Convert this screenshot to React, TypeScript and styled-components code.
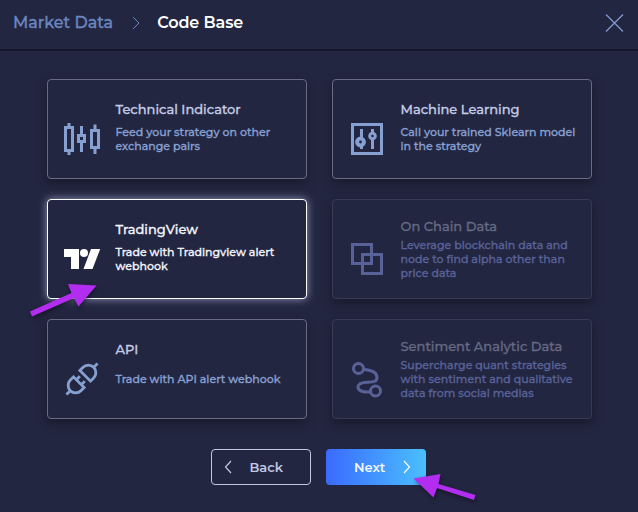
import React from 'react';
import styled, { createGlobalStyle, css } from 'styled-components';

const GlobalStyle = createGlobalStyle`
  *, *::before, *::after { box-sizing: border-box; }
  body {
    margin: 0;
    background: #232640;
    font-family: Montserrat, Inter, sans-serif;
    -webkit-font-smoothing: antialiased;
    -webkit-text-stroke: 0.3px currentColor;
  }
  button { font: inherit; }
`;

type State = 'normal' | 'selected' | 'disabled';

const Dialog = styled.div`
  position: relative;
  display: flex;
  flex-direction: column;
  width: 638px;
  height: 512px;
  overflow: hidden;
  background: #232640;
`;

const Header = styled.header`
  display: flex;
  align-items: center;
  height: 51px;
  padding: 0 14px 4px 13px;
  border-bottom: 2px solid #15172a;
`;

const Crumb = styled.span<{ $current?: boolean }>`
  font-size: 16px;
  line-height: 20px;
  font-weight: ${(p) => (p.$current ? 600 : 500)};
  letter-spacing: ${(p) => (p.$current ? '-0.1px' : '0')};
  color: ${(p) => (p.$current ? '#ffffff' : '#6a87c0')};
  -webkit-text-stroke-width: ${(p) => (p.$current ? '0' : '0.3px')};
  white-space: nowrap;
`;

const CrumbChevron = styled.svg`
  width: 8px;
  height: 14px;
  margin: 1px 17px 0 19px;
`;

const CloseButton = styled.button`
  display: flex;
  margin: 0 0 0 auto;
  padding: 0;
  border: 0;
  background: none;
`;

const Options = styled.main`
  display: grid;
  grid-template-columns: 260px 260px;
  grid-auto-rows: 100px;
  gap: 20px 25px;
  padding: 28px 0 0 47px;
`;

const cardStates = {
  normal: css`
    border-color: #676b84;
    box-shadow: 0 4px 10px rgba(12, 13, 28, 0.5);
  `,
  selected: css`
    border-color: #ffffff;
    box-shadow: 0 0 9px rgba(202, 212, 250, 0.65);
  `,
  disabled: css`
    border-color: #373a54;
    box-shadow: 0 4px 10px rgba(12, 13, 28, 0.5);
  `,
};

const Card = styled.article<{ $state: State }>`
  display: grid;
  grid-template-columns: 40px 1fr;
  column-gap: 13.5px;
  align-items: center;
  padding: 0 0 4px 14px;
  border: 1px solid;
  border-radius: 4px;
  background: #232640;
  ${(p) => cardStates[p.$state]}
`;

const iconColors = { normal: '#87a0d2', selected: '#ffffff', disabled: '#586298' };
const titleColors = { normal: '#c4cbe6', selected: '#f2f4fc', disabled: '#656983' };
const textColors = { normal: '#87a0d2', selected: '#f2f4fc', disabled: '#586298' };

const CardIcon = styled.svg<{ $state: State }>`
  width: 40px;
  height: 40px;
  margin-top: 28px;
  color: ${(p) => iconColors[p.$state]};
  overflow: visible;
`;

const CardBody = styled.div`
  display: flex;
  flex-direction: column;
`;

const CardTitle = styled.h2<{ $state: State }>`
  margin: 0;
  font-size: 13px;
  line-height: 24px;
  font-weight: 500;
  color: ${(p) => titleColors[p.$state]};
`;

const CardText = styled.p<{ $state: State }>`
  display: flex;
  flex-direction: column;
  justify-content: center;
  min-height: 36px;
  margin: 0;
  font-size: 11px;
  line-height: 14px;
  font-weight: 500;
  color: ${(p) => textColors[p.$state]};
`;

const TextLine = styled.span`
  white-space: nowrap;
`;

const Footer = styled.footer`
  display: flex;
  justify-content: center;
  gap: 15px;
  padding: 30px 1px 0 0;
`;

const ActionButton = styled.button<{ $primary?: boolean }>`
  display: flex;
  align-items: center;
  justify-content: space-between;
  width: 100px;
  height: 36px;
  padding: ${(p) => (p.$primary ? '0 15px 0 28px' : '0 27px 0 12px')};
  border: ${(p) => (p.$primary ? '0' : '1px solid #c0c8e4')};
  border-radius: 4px;
  background: ${(p) => (p.$primary ? 'linear-gradient(90deg, #3a6aff, #4abfff)' : 'transparent')};
  color: ${(p) => (p.$primary ? '#f4f8ff' : '#c0c8e4')};
  font-size: 13px;
  line-height: 18px;
  font-weight: 600;
  -webkit-text-stroke-width: 0;
`;

const Annotations = styled.svg`
  position: absolute;
  inset: 0;
  pointer-events: none;
  filter: drop-shadow(1px 2px 2px rgba(8, 8, 20, 0.55));
`;

const CandlesIcon = () => (
  <g fill="none" stroke="currentColor" strokeWidth="3">
    <path d="M3.5 6.5h7v23h-7zM7 2v5M7 29v5M16.5 14.5h6v6h-6zM19.500 5v9M19.500 21v10M29.500 9.500h7v17h-7zM33 3.500v6M33 26.500v6.500" />
  </g>
);

const SlidersIcon = () => (
  <g fill="none" stroke="currentColor" strokeWidth="3">
    <path d="M5.500 3.500h29v29h-29z" />
    <path d="M14.500 8v20M25.500 8v20" />
    <circle cx="13.500" cy="21" r="3.400" strokeWidth="4" fill="#232640" />
    <circle cx="25.500" cy="15" r="2.800" fill="#232640" />
  </g>
);

const TradingViewIcon = () => (
  <g fill="currentColor">
    <path d="M2 8h15v20H9V16H2zM29 8h9.200L30.500 28h-9z" />
    <circle cx="22" cy="12" r="4" />
  </g>
);

const ChainIcon = () => (
  <g fill="none" stroke="currentColor" strokeWidth="3">
    <path d="M5.500 3.500h19v19h-19zM15.500 13.500h19v19h-19z" />
  </g>
);

const PlugIcon = () => (
  <g fill="none" stroke="currentColor" strokeWidth="2.800" transform="rotate(45 20 18)">
    <path d="M12.500 13.500h15V9a7.500 7.500 0 0 0-15 0zM20 1.500v-5.500" />
    <path d="M12.500 22.500h15V27a7.500 7.500 0 0 1-15 0zM20 34.500v5.500M16.500 22.500v-5M23.500 22.500v-5" />
  </g>
);

const RouteIcon = () => (
  <g fill="none" stroke="currentColor" strokeWidth="3">
    <circle cx="11.500" cy="7.500" r="5" />
    <circle cx="28.500" cy="30" r="5" />
    <path d="M16.500 8.500C25 9 30 12 30 16.500S26 21 20.500 21.300 11 22.500 11 26s4.500 5.500 12.500 5" />
  </g>
);

interface Option {
  title: string;
  lines: string[];
  state: State;
  Icon: React.FC;
}

const options: Option[] = [
  {
    title: 'Technical Indicator',
    lines: ['Feed your strategy on other', 'exchange pairs'],
    state: 'normal',
    Icon: CandlesIcon,
  },
  {
    title: 'Machine Learning',
    lines: ['Call your trained Sklearn model', 'in the strategy'],
    state: 'normal',
    Icon: SlidersIcon,
  },
  {
    title: 'TradingView',
    lines: ['Trade with Tradingview alert', 'webhook'],
    state: 'selected',
    Icon: TradingViewIcon,
  },
  {
    title: 'On Chain Data',
    lines: ['Leverage blockchain data and', 'node to find alpha other than', 'price data'],
    state: 'disabled',
    Icon: ChainIcon,
  },
  {
    title: 'API',
    lines: ['Trade with API alert webhook'],
    state: 'normal',
    Icon: PlugIcon,
  },
  {
    title: 'Sentiment Analytic Data',
    lines: ['Supercharge quant strategies', 'with sentiment and qualitative', 'data from social medias'],
    state: 'disabled',
    Icon: RouteIcon,
  },
];

export default function App() {
  return (
    <>
      <GlobalStyle />
      <Dialog>
        <Header>
          <Crumb>Market Data</Crumb>
          <CrumbChevron viewBox="0 0 8 14" fill="none" stroke="#6a87c0">
            <path d="M1 1l6 6-6 6" />
          </CrumbChevron>
          <Crumb $current>Code Base</Crumb>
          <CloseButton aria-label="Close">
            <svg width="20" height="20" viewBox="0 0 20 20" fill="none" stroke="#7f99cf" strokeWidth="1.300">
              <path d="M2 1.500l17 17M19 1.500l-17 17" />
            </svg>
          </CloseButton>
        </Header>
        <Options>
          {options.map(({ title, lines, state, Icon }) => (
            <Card key={title} $state={state}>
              <CardIcon viewBox="0 0 40 40" $state={state}>
                <Icon />
              </CardIcon>
              <CardBody>
                <CardTitle $state={state}>{title}</CardTitle>
                <CardText $state={state}>
                  {lines.map((text) => (
                    <TextLine key={text}>{text}</TextLine>
                  ))}
                </CardText>
              </CardBody>
            </Card>
          ))}
        </Options>
        <Footer>
          <ActionButton>
            <svg width="8" height="14" viewBox="0 0 8 14" fill="none" stroke="currentColor" strokeWidth="1.200">
              <path d="M7 1L1.500 7 7 13" />
            </svg>
            Back
          </ActionButton>
          <ActionButton $primary>
            Next
            <svg width="8" height="14" viewBox="0 0 8 14" fill="none" stroke="currentColor" strokeWidth="1.200">
              <path d="M1 1l5.500 6L1 13" />
            </svg>
          </ActionButton>
        </Footer>
        <Annotations width="638" height="512" viewBox="0 0 638 512" fill="#b22df0">
          <path d="M30 311.500L71.500 293 68 284l28.500 1.500L78.500 306.500 74 298 32 316.500z" />
          <path d="M413.500 478.500L440.500 474l-2 10 37 11-1.500 5-37-12-3.500 9.500z" />
        </Annotations>
      </Dialog>
    </>
  );
}
